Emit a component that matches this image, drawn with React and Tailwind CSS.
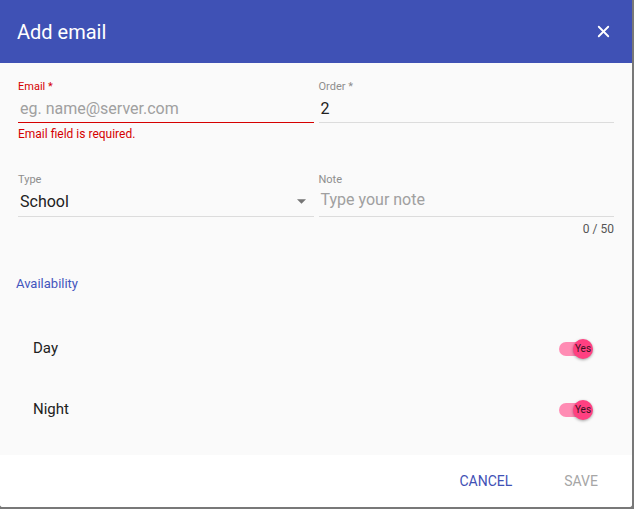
import { X } from 'lucide-react';

function Toggle() {
  return (
    <div className="relative w-[36px] h-[20px] flex items-center">
      <div className="ml-[1px] w-[33px] h-[14px] rounded-full bg-[#ff8cb4]" />
      <div className="absolute right-[1px] top-0 w-[20px] h-[20px] rounded-full bg-[#ff4081] shadow-[0_1px_3px_rgba(0,0,0,0.35)] flex items-center justify-center text-[10px] leading-none text-[#3a1020]">
        Yes
      </div>
    </div>
  );
}

export default function App() {
  return (
    <div className="w-[634px] h-[509px] bg-[#787878]" style={{ fontFamily: 'Roboto, "Liberation Sans", sans-serif' }}>
      <div className="w-[632px] h-[507px] rounded-b-[3px] overflow-hidden flex flex-col bg-white">
        <div className="h-[63px] bg-[#3f51b5] pl-[17px] pr-[19px] flex items-center justify-between">
          <h2 className="text-[20px] font-normal text-white leading-none">Add email</h2>
          <X size={19} strokeWidth={2.3} className="text-white" />
        </div>

        <div className="flex-1 bg-[#fafafa] px-[18px] pt-[18px]">
          <div className="grid grid-cols-2 gap-x-[5px]">
            <div>
              <label className="block h-[12px] text-[11px] leading-[12px] text-[#d50000]">Email *</label>
              <div className="mt-[6px] h-[19px] text-[16px] leading-[19px] text-[#a0a0a0] pl-[2px]">eg. name@server.com</div>
              <div className="mt-[4px] h-[1px] bg-[#d50000]" />
              <p className="mt-[5px] text-[12px] leading-[13px] text-[#d50000]">Email field is required.</p>
            </div>
            <div>
              <label className="block h-[12px] text-[11px] leading-[12px] text-[#8e8e8e]">Order *</label>
              <div className="mt-[6px] h-[19px] text-[16px] leading-[19px] text-[#212121] pl-[2px]">2</div>
              <div className="mt-[4px] h-[1px] bg-[#dcdcdc]" />
            </div>
          </div>

          <div className="grid grid-cols-2 gap-x-[5px] mt-[33px]">
            <div>
              <label className="block h-[12px] text-[11px] leading-[12px] text-[#8e8e8e]">Type</label>
              <div className="mt-[6px] h-[19px] flex items-center justify-between pl-[2px] pr-[8px]">
                <span className="text-[16px] leading-[19px] text-[#212121]">School</span>
                <svg width="9" height="5" viewBox="0 0 10 5">
                  <path d="M0 0 L10 0 L5 5 Z" fill="#757575" />
                </svg>
              </div>
              <div className="mt-[5px] h-[1px] bg-[#dcdcdc]" />
            </div>
            <div>
              <label className="block h-[12px] text-[11px] leading-[12px] text-[#8e8e8e]">Note</label>
              <div className="mt-[4px] h-[19px] text-[16px] leading-[19px] text-[#a0a0a0] pl-[2px]">Type your note</div>
              <div className="mt-[7px] h-[1px] bg-[#dcdcdc]" />
              <p className="mt-[6px] text-right text-[12px] leading-[13px] text-[#555]">0 / 50</p>
            </div>
          </div>

          <div className="-ml-[2px] mt-[40px] text-[13px] leading-[16px] text-[#4355bd]">Availability</div>

          <div className="mt-[26px]">
            <div className="h-[61px] flex items-center justify-between pl-[15px] pr-[20px]">
              <span className="text-[15px] text-[#212121]">Day</span>
              <Toggle />
            </div>
            <div className="h-[61px] flex items-center justify-between pl-[15px] pr-[20px]">
              <span className="text-[15px] text-[#212121]">Night</span>
              <Toggle />
            </div>
          </div>
        </div>

        <div className="h-[52px] bg-white flex items-center justify-end pr-[34px] gap-[52px]">
          <button className="text-[14px] text-[#3f51b5]">CANCEL</button>
          <button className="text-[14px] text-[#a6a6a6]">SAVE</button>
        </div>
      </div>
    </div>
  );
}
